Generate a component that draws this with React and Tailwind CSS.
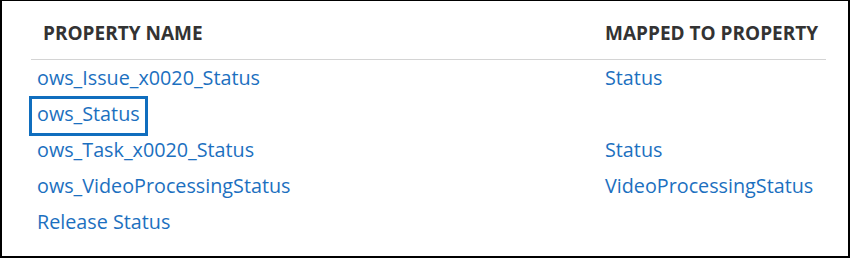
const rows = [
  { name: 'ows_Issue_x0020_Status', mapped: 'Status' },
  { name: 'ows_Status', mapped: '', focused: true },
  { name: 'ows_Task_x0020_Status', mapped: 'Status' },
  { name: 'ows_VideoProcessingStatus', mapped: 'VideoProcessingStatus' },
  { name: 'Release Status', mapped: '' },
]

export default function App() {
  return (
    <div className="w-[850px] h-[259px] bg-white">
      <div className="h-[258px] border-t border-l-2 border-r-2 border-b-2 border-black pl-[29px] font-['Segoe_UI','Open_Sans',sans-serif]">
        <div className="w-[795px]">
          <div className="grid grid-cols-[562px_1fr] border-b border-[#d4d4d4] pt-5 pb-3.5 text-[19px]">
            <div className="pl-3 font-bold text-[#333333] leading-[24px]">PROPERTY NAME</div>
            <div className="pl-3 font-bold text-[#333333] leading-[24px]">MAPPED TO PROPERTY</div>
          </div>
          {rows.map((r) => (
            <div key={r.name} className="grid grid-cols-[562px_1fr] h-[36px] items-center text-[19.75px] text-[#1c70c0] leading-[24px]">
              <div className="relative pl-1.5">
                <span>{r.name}</span>
                {r.focused && (
                  <span className="absolute left-[-2px] top-[-6px] w-[119px] h-[40px] border-3 border-[#106ebe]" />
                )}
              </div>
              <div className="pl-3">{r.mapped}</div>
            </div>
          ))}
        </div>
      </div>
    </div>
  )
}
